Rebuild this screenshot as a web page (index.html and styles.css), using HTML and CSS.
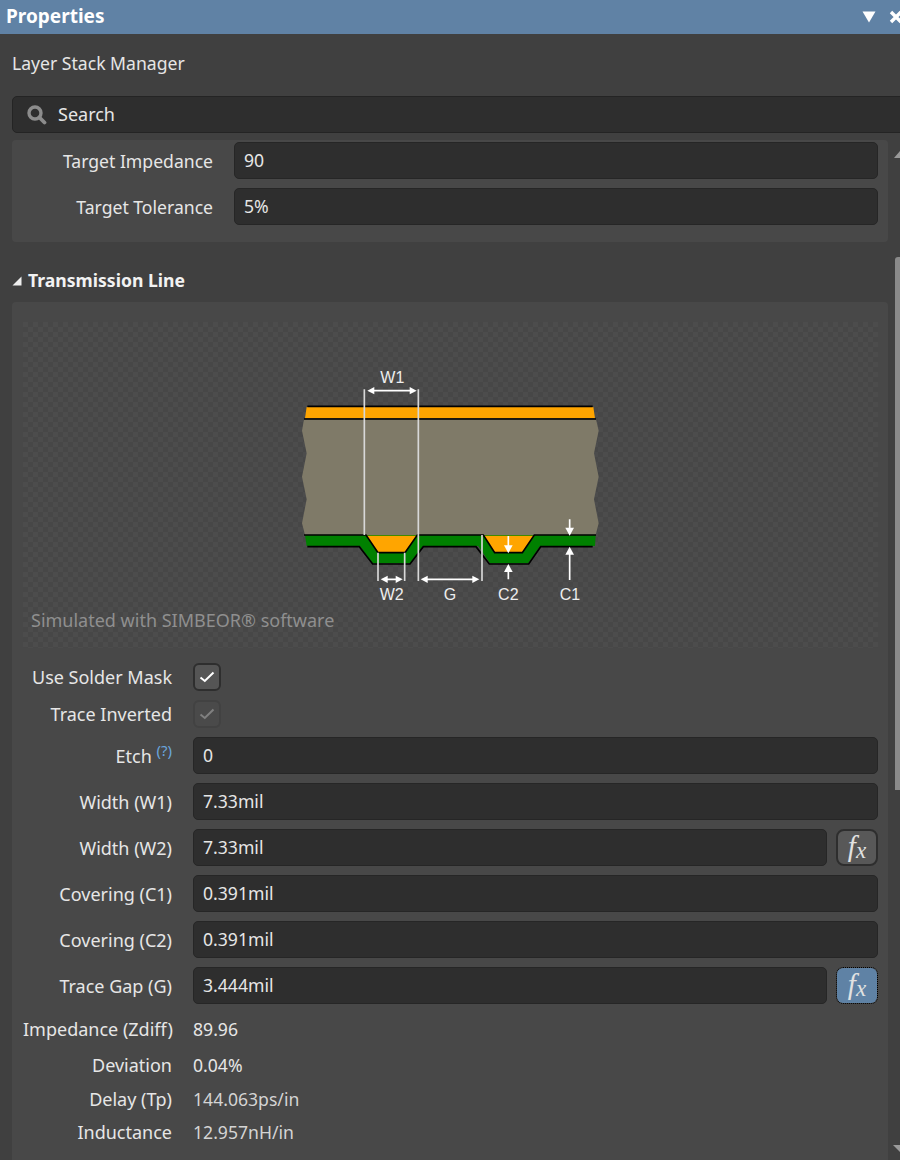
FILE: index.html
```html
<!DOCTYPE html>
<html>
<head>
    <title>Properties</title>
    <link rel="stylesheet" href="styles.css">
</head>
<body>
    <div class="panel">
        <div class="titlebar">
            <span class="titlebar-name">Properties</span>
            <span class="titlebar-tools">
                <svg class="tool-icon" width="14" height="12" viewBox="0 0 14 12"><polygon points="0.5,0.5 13.5,0.5 7,11.5" fill="#fff"/></svg>
                <svg class="tool-icon" width="14" height="14" viewBox="0 0 14 14"><path d="M2 2 L12 12 M12 2 L2 12" stroke="#fff" stroke-width="3.4" fill="none"/></svg>
            </span>
        </div>

        <div class="panel-mode">Layer Stack Manager</div>

        <div class="search">
            <svg width="20" height="20" viewBox="0 0 20 20"><circle cx="8" cy="8" r="6" fill="none" stroke="#8c8c8c" stroke-width="3.4"/><path d="M12.5 12.5 L17.5 17.5" stroke="#8c8c8c" stroke-width="3.8" stroke-linecap="round"/></svg>
            <span>Search</span>
        </div>

        <div class="scroller">
            <div class="content">
                <div class="card card-target">
                    <div class="row">
                        <label class="row-label">Target Impedance</label>
                        <input class="field" type="text" value="90">
                    </div>
                    <div class="row">
                        <label class="row-label">Target Tolerance</label>
                        <input class="field" type="text" value="5%">
                    </div>
                </div>

                <div class="section-head">
                    <svg width="10" height="10" viewBox="0 0 10 10"><polygon points="0.5,9.5 9.5,9.5 9.5,0.5" fill="#eee"/></svg>
                    <span>Transmission Line</span>
                </div>

                <div class="card card-line">
                    <div class="diagram">
                        <svg class="diagram-art" width="320" height="250" viewBox="0 0 960 750">
                            <polygon points="45,175 50,141 910,141 915,175" fill="#ffa500"/>
                            <path d="M52,139 H908" stroke="#000" stroke-width="5"/>
                            <polygon points="42,178 918,178 926,212 912,280 926,350 912,418 926,490 917,525 45,525 36,490 50,418 36,350 50,280 36,212" fill="#7f7a68"/>
                            <path d="M42,177 H918" stroke="#000" stroke-width="5"/>
                            <polygon points="45,525 917,525 915,558 750,558 715,610 600,610 565,558 400,558 362,610 248,610 210,558 50,558" fill="#008000"/>
                            <polygon points="228,527 382,527 345,577 264,577" fill="#ffa500"/>
                            <polygon points="580,527 733,527 697,577 614,577" fill="#ffa500"/>
                            <g fill="none" stroke="#000" stroke-width="5">
                                <path d="M42,525 H228 L264,578 H345 L382,525 H580 L614,578 H697 L733,525 H918"/>
                                <path d="M52,560 H208 L248,612 H360 L400,560 H558 L598,612 H716 L752,560 H908"/>
                            </g>
                            <g stroke="#d8d8d8" stroke-width="5" fill="none">
                                <path d="M223,88 V525 M385,88 V663 M264,578 V663 M344,578 V663 M576,525 V663"/>
                            </g>
                            <g stroke="#fff" stroke-width="5" fill="none">
                                <path d="M245,92 H367 M285,658 H325 M405,658 H555 M655,528 V560 M655,630 V658 M839,478 V505 M839,582 V660"/>
                            </g>
                            <g fill="#fff">
                                <polygon points="232,92 253,81 253,103"/>
                                <polygon points="380,92 359,81 359,103"/>
                                <polygon points="272,658 293,647 293,669"/>
                                <polygon points="338,658 317,647 317,669"/>
                                <polygon points="392,658 413,647 413,669"/>
                                <polygon points="568,658 547,647 547,669"/>
                                <polygon points="655,580 642,556 668,556"/>
                                <polygon points="655,612 642,636 668,636"/>
                                <polygon points="839,527 826,503 852,503"/>
                                <polygon points="839,560 826,584 852,584"/>
                            </g>
                            <g class="diagram-text">
                                <text x="307" y="68">W1</text>
                                <text x="305" y="720">W2</text>
                                <text x="480" y="720">G</text>
                                <text x="655" y="720">C2</text>
                                <text x="840" y="720">C1</text>
                            </g>
                        </svg>
                        <div class="diagram-note">Simulated with SIMBEOR® software</div>
                    </div>

                    <div class="row row-check">
                        <label class="row-label">Use Solder Mask</label>
                        <span class="check">
                            <svg width="16" height="12" viewBox="0 0 16 12"><path d="M1.5 6.5 L5.8 10 L14.5 1.5" fill="none" stroke="#fff" stroke-width="2"/></svg>
                        </span>
                    </div>
                    <div class="row row-check">
                        <label class="row-label">Trace Inverted</label>
                        <span class="check check-off">
                            <svg width="16" height="12" viewBox="0 0 16 12"><path d="M1.5 6.5 L5.8 10 L14.5 1.5" fill="none" stroke="#808080" stroke-width="2"/></svg>
                        </span>
                    </div>
                    <div class="row">
                        <label class="row-label">Etch <sup class="help">(?)</sup></label>
                        <input class="field" type="text" value="0">
                    </div>
                    <div class="row">
                        <label class="row-label">Width (W1)</label>
                        <input class="field" type="text" value="7.33mil">
                    </div>
                    <div class="row">
                        <label class="row-label">Width (W2)</label>
                        <input class="field" type="text" value="7.33mil">
                        <button class="fx"><span class="fx-f">f</span><span class="fx-x">x</span></button>
                    </div>
                    <div class="row">
                        <label class="row-label">Covering (C1)</label>
                        <input class="field" type="text" value="0.391mil">
                    </div>
                    <div class="row">
                        <label class="row-label">Covering (C2)</label>
                        <input class="field" type="text" value="0.391mil">
                    </div>
                    <div class="row">
                        <label class="row-label">Trace Gap (G)</label>
                        <input class="field" type="text" value="3.444mil">
                        <button class="fx fx-on"><span class="fx-f">f</span><span class="fx-x">x</span></button>
                    </div>

                    <div class="row row-info">
                        <label class="row-label">Impedance (Zdiff)</label>
                        <span class="info-value">89.96</span>
                    </div>
                    <div class="row row-info deviation">
                        <label class="row-label">Deviation</label>
                        <span class="info-value">0.04%</span>
                    </div>
                    <div class="row row-info delay">
                        <label class="row-label">Delay (Tp)</label>
                        <span class="info-value value-dim">144.063ps/in</span>
                    </div>
                    <div class="row row-info">
                        <label class="row-label">Inductance</label>
                        <span class="info-value value-dim">12.957nH/in</span>
                    </div>
                    <div class="row row-info capacitance">
                        <label class="row-label">Capacitance</label>
                        <span class="info-value value-dim">1.6012pF/in</span>
                    </div>
                </div>
            </div>

            <div class="scrollbar">
                <svg class="scroll-arrow" width="12" height="8" viewBox="0 0 12 8"><polygon points="6,7 12,7 12,0" fill="#9a9a9a"/></svg>
                <div class="scroll-thumb"></div>
                <svg class="scroll-arrow arrow-down" width="12" height="8" viewBox="0 0 12 8"><polygon points="5,0 12,0 12,7" fill="#9a9a9a"/></svg>
            </div>
        </div>
    </div>
</body>
</html>
```

FILE: styles.css
```css
body {
    margin: 0;
    background-color: #404040;
    font-family: "Noto Sans", "Open Sans", sans-serif;
    font-size: 17.6px;
    color: #e6e6e6;
    overflow: hidden;
}

.panel {
    width: 900px;
    height: 1160px;
    overflow: hidden;
    display: flex;
    flex-direction: column;
}

.titlebar {
    flex: none;
    height: 34px;
    padding: 0 0 0 6px;
    background-color: #6082a5;
    display: flex;
    justify-content: space-between;
    align-items: center;
}

.titlebar-name {
    font-size: 19px;
    font-weight: 700;
    color: #fff;
    margin-top: -2px;
}

.titlebar-tools {
    display: flex;
    align-items: center;
    gap: 13px;
    margin-right: -3px;
}

.tool-icon {
    display: block;
}

.panel-mode {
    flex: none;
    height: 62px;
    padding-left: 12px;
    line-height: 59px;
}

.search {
    flex: none;
    box-sizing: border-box;
    height: 37px;
    margin: 0 -10px 7px 12px;
    padding-left: 14px;
    background-color: #2e2e2e;
    border: 1px solid #242424;
    border-radius: 5px;
    display: flex;
    align-items: center;
    gap: 11px;
}

.search span {
    font-size: 18px;
    margin-top: -1px;
}

.scroller {
    flex: 1;
    display: flex;
    min-height: 0;
}

.content {
    flex: none;
    width: 876px;
    margin-left: 12px;
}

.card {
    background-color: #484848;
    border-radius: 4px;
}

.card-target {
    padding: 2px 10px 8px 0;
}

.card-target .row-label {
    width: 201px;
}

.card-line {
    padding: 20px 10px 0 11px;
}

.card-line .row-label {
    font-size: 18px;
}

.section-head {
    height: 60px;
    box-sizing: border-box;
    padding-top: 27px;
    display: flex;
    align-items: flex-start;
    gap: 6px;
    font-weight: 700;
    line-height: 22px;
    color: #f2f2f2;
}

.section-head svg {
    margin-top: 7px;
}

.diagram {
    height: 326px;
    margin-bottom: 15px;
    box-sizing: border-box;
    padding: 38px 1px 0 0;
    background-image: repeating-conic-gradient(#474747 0 25%, #4c4c4c 0 50%);
    background-size: 10px 10px;
    display: flex;
    flex-direction: column;
    align-items: center;
}

.diagram-art {
    flex: none;
}

.diagram-text text {
    font-family: "Liberation Sans", Arial, sans-serif;
    font-size: 48px;
    fill: #eee;
    text-anchor: middle;
}

.diagram-note {
    align-self: flex-start;
    padding-left: 8px;
    line-height: 21px;
    font-size: 18px;
    color: #8f8f8f;
}

.row {
    display: flex;
    align-items: center;
    margin-bottom: 9px;
}

.row-label {
    flex: none;
    width: 149px;
    margin-right: 21px;
    text-align: right;
    white-space: nowrap;
}

.field {
    flex: 1;
    min-width: 0;
    box-sizing: border-box;
    height: 37px;
    padding: 0 9px 2px;
    background-color: #2e2e2e;
    border: 1px solid #262626;
    border-radius: 5px;
    font-family: inherit;
    font-size: 17.6px;
    color: #e6e6e6;
}

.card-line .help {
    font-size: 15px;
    line-height: 0;
    color: #6aa5dc;
}

.row-check {
    height: 28px;
}

.check {
    box-sizing: border-box;
    width: 28px;
    height: 28px;
    background-color: #555;
    border: 2px solid #2e2e2e;
    border-radius: 6px;
    display: flex;
    align-items: center;
    justify-content: center;
}

.check-off {
    background-color: #4a4a4a;
    border-color: #424242;
}

.fx {
    flex: none;
    box-sizing: border-box;
    width: 42px;
    height: 37px;
    margin-left: 9px;
    padding: 0 0 2px;
    background-color: #585858;
    border: 2px solid #2e2e2e;
    border-radius: 8px;
    font-family: "Liberation Serif", serif;
    font-style: italic;
    color: #e2e2e2;
}

.fx-f {
    font-size: 29px;
    line-height: 1;
}

.fx-x {
    font-size: 23px;
    line-height: 1;
    position: relative;
    top: 2px;
}

.fx-on {
    background-color: #5f82a5;
    background-clip: padding-box;
    border: 1px dotted #000;
    border-radius: 7px;
}

.row-info {
    height: 33px;
    margin-bottom: 0;
    margin-top: -1px;
    padding-bottom: 1px;
}

.deviation {
    margin-top: 2px;
}

.delay {
    margin-top: 0;
}

.capacitance {
    margin-top: 2px;
}

.info-value {
    color: #e6e6e6;
}

.value-dim {
    color: #d4d4d4;
}

.scrollbar {
    flex: none;
    width: 12px;
    overflow: hidden;
    display: flex;
    flex-direction: column;
}

.scroll-arrow {
    flex: none;
    display: block;
    margin: 11px 0 0 0;
}

.arrow-down {
    margin: auto 0 7px 0;
}

.scroll-thumb {
    flex: none;
    width: 12px;
    height: 533px;
    margin: 98px 0 0 7px;
    background-color: #8a8a8a;
    border-radius: 3px 0 0 0;
}
```
